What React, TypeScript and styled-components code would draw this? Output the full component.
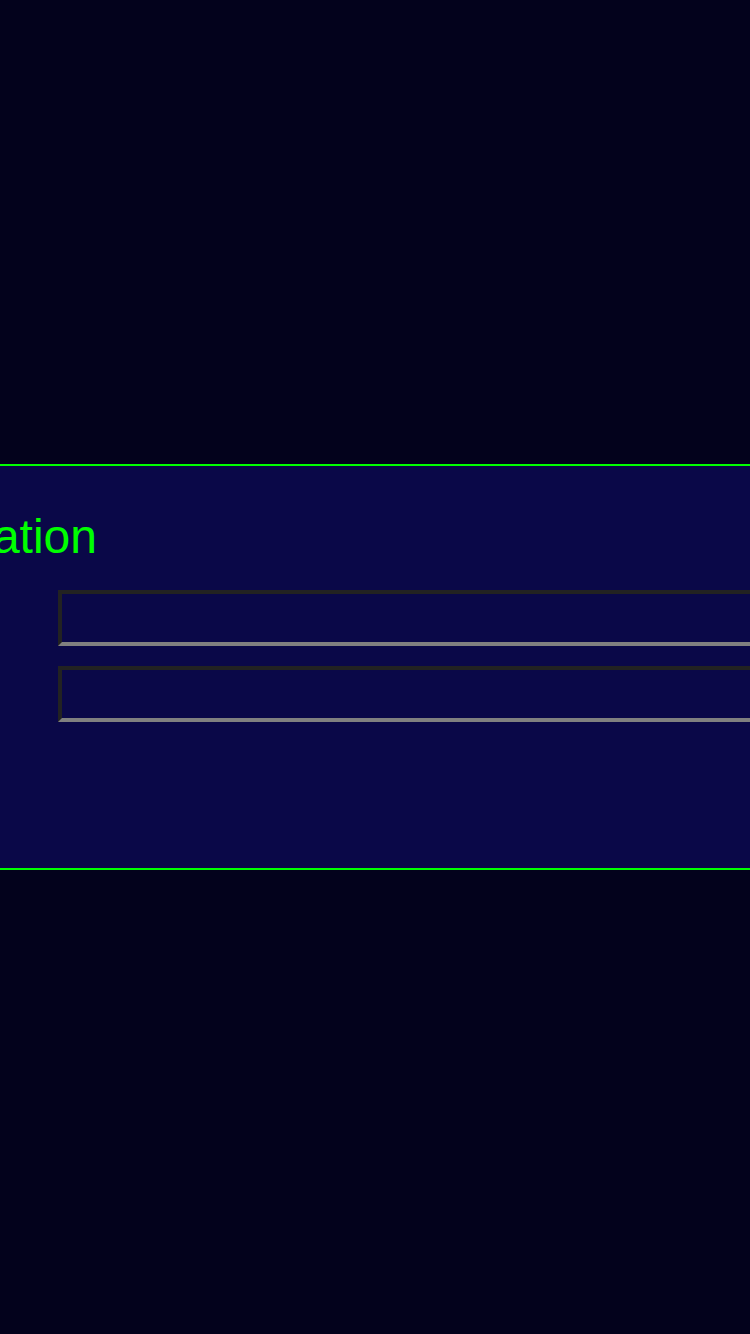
import React from "react";
import styled, { createGlobalStyle } from "styled-components";

const Global = createGlobalStyle`
  html, body {
    margin: 0;
    padding: 0;
    overflow: hidden;
    background: #03021c;
  }
  * { box-sizing: border-box; }
`;

const Page = styled.div`
  width: 750px;
  height: 1334px;
  display: flex;
  align-items: center;
  background: #03021c;
  font-family: "Liberation Sans", Arial, sans-serif;
`;

const Panel = styled.section`
  width: 100%;
  background: #0a0848;
  border-top: 2px solid #00ff00;
  border-bottom: 2px solid #00ff00;
  padding: 43px 0 146px;
  display: flex;
  flex-direction: column;
  overflow: hidden;
`;

const TitleRow = styled.div`
  width: 97px;
  height: 55px;
  display: flex;
  justify-content: flex-end;
  margin-bottom: 26px;
`;

const Title = styled.h1`
  margin: 0;
  flex: none;
  white-space: nowrap;
  font-size: 48px;
  font-weight: 400;
  line-height: 55px;
  color: #00ff00;
`;

const Fields = styled.div`
  display: flex;
  flex-direction: column;
  gap: 20px;
  padding-left: 58px;
`;

const Input = styled.input`
  flex: none;
  width: 800px;
  height: 56px;
  background: transparent;
  border-style: solid;
  border-width: 4px;
  border-color: #222222 #808080 #808080 #222222;
  color: #00ff00;
  font-size: 24px;
  padding: 0 12px;
  outline: none;
`;

export default function App() {
  return (
    <>
      <Global />
      <Page>
        <Panel>
          <TitleRow>
            <Title>Registration</Title>
          </TitleRow>
          <Fields>
            <Input type="text" aria-label="username" />
            <Input type="password" aria-label="password" />
          </Fields>
        </Panel>
      </Page>
    </>
  );
}
